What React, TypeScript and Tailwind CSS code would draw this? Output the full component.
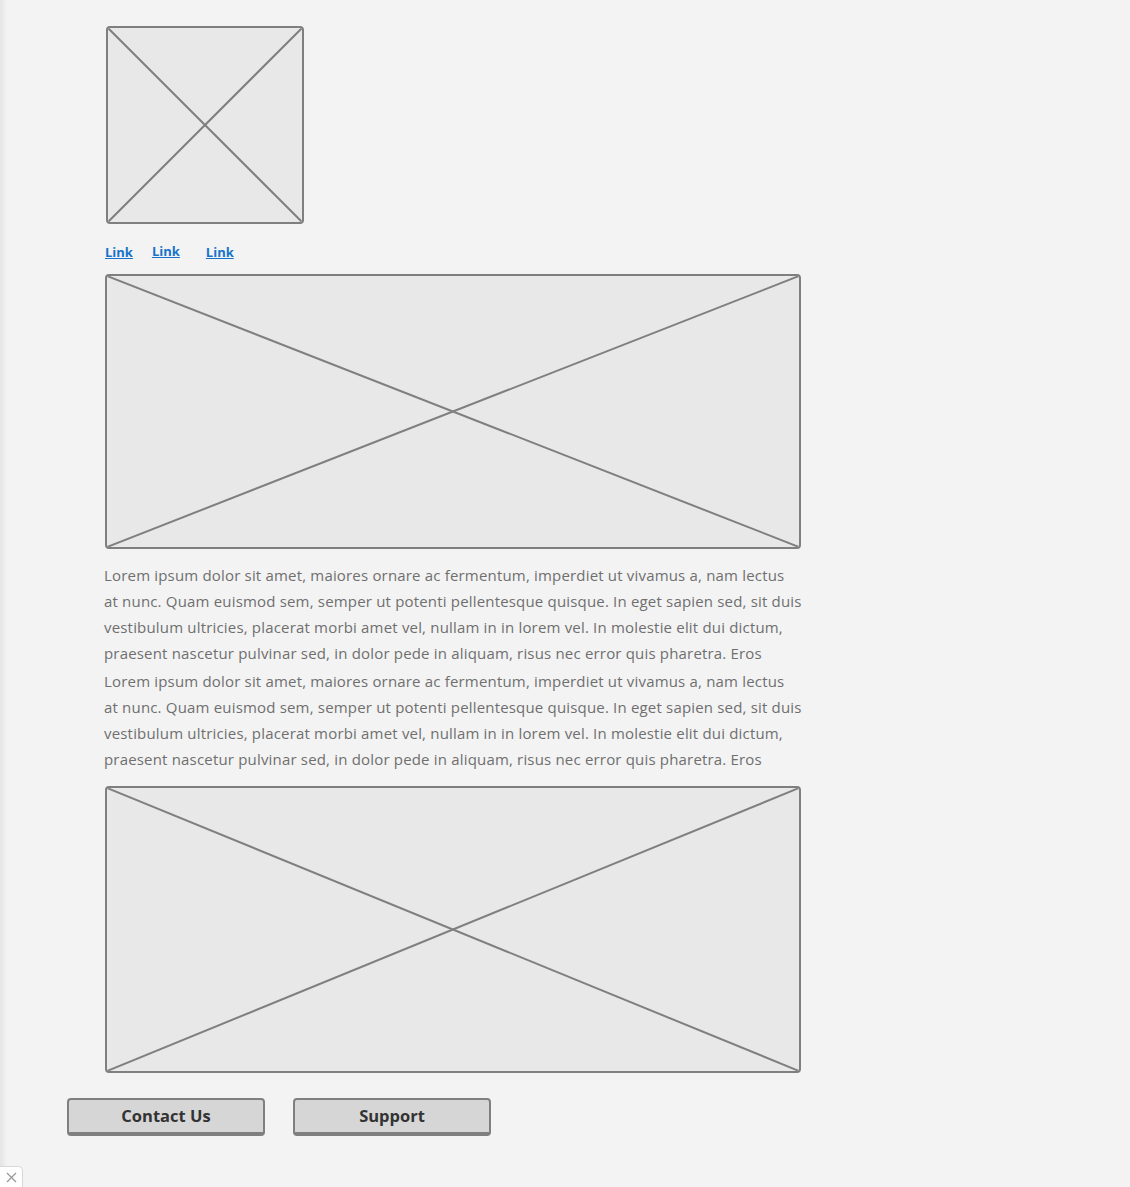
import React from 'react';

const para = [
  'Lorem ipsum dolor sit amet, maiores ornare ac fermentum, imperdiet ut vivamus a, nam lectus',
  'at nunc. Quam euismod sem, semper ut potenti pellentesque quisque. In eget sapien sed, sit duis',
  'vestibulum ultricies, placerat morbi amet vel, nullam in in lorem vel. In molestie elit dui dictum,',
  'praesent nascetur pulvinar sed, in dolor pede in aliquam, risus nec error quis pharetra. Eros',
];

function Placeholder({ className }: { className: string }) {
  return (
    <div className={`relative overflow-hidden rounded-[4px] border-2 border-[#7f7f7f] bg-[#e8e8e8] ${className}`}>
      <svg className="absolute inset-0 h-full w-full" preserveAspectRatio="none" viewBox="0 0 100 100">
        <line x1="0" y1="0" x2="100" y2="100" stroke="#7f7f7f" strokeWidth="2" vectorEffect="non-scaling-stroke" />
        <line x1="100" y1="0" x2="0" y2="100" stroke="#7f7f7f" strokeWidth="2" vectorEffect="non-scaling-stroke" />
      </svg>
    </div>
  );
}

function Paragraph() {
  return (
    <div className="text-[15px] leading-[26px] tracking-[0.18px] text-[#6f6f6f]">
      {para.map((l) => (
        <div key={l} className="whitespace-nowrap">
          {l}
        </div>
      ))}
    </div>
  );
}

function WireButton({ label }: { label: string }) {
  return (
    <button className="h-[38px] w-[198px] rounded-[4px] border-2 border-b-4 border-[#7f7f7f] bg-[#d6d6d6] text-[16.5px] font-bold text-[#333]">
      {label}
    </button>
  );
}

export default function App() {
  return (
    <div
      className="relative min-h-[1187px] w-full bg-[linear-gradient(to_right,#e4e4e4,#f3f3f3_7px)] pt-[26px]"
      style={{ fontFamily: '"Open Sans", "Noto Sans", sans-serif' }}
    >
      <div className="ml-[106px]">
        <Placeholder className="h-[198px] w-[198px]" />
      </div>

      <div className="ml-[105px] mt-[18px] flex h-[20px] items-start text-[13px] font-bold text-[#1773c9]">
        <a href="#" className="mt-[1px] underline">Link</a>
        <a href="#" className="ml-[19px] underline">Link</a>
        <a href="#" className="ml-[26px] mt-[1px] underline">Link</a>
      </div>

      <div className="ml-[105px] mt-[12px] w-[696px]">
        <Placeholder className="h-[275px] w-full" />
        <div className="mt-[13px] ml-[-1px] space-y-[2px]">
          <Paragraph />
          <Paragraph />
        </div>
        <Placeholder className="mt-[14px] h-[287px] w-full" />
      </div>

      <div className="ml-[67px] mt-[25px] flex gap-[28px]">
        <WireButton label="Contact Us" />
        <WireButton label="Support" />
      </div>

      <div className="absolute bottom-0 left-0 flex h-[21px] w-[23px] items-center justify-center rounded-tr-[5px] border border-l-0 border-b-0 border-[#d8d8d8] bg-white text-[#999]">
        <svg width="11" height="11" viewBox="0 0 11 11">
          <path d="M1 1L10 10M10 1L1 10" stroke="#9a9a9a" strokeWidth="1.3" />
        </svg>
      </div>
    </div>
  );
}
